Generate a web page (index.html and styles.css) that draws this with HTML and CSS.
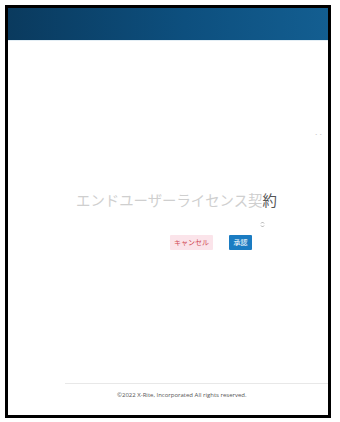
FILE: index.html
```html
<!DOCTYPE html>
<html lang="ja">
<head>
<meta charset="utf-8">
<link rel="stylesheet" href="styles.css">
</head>
<body>
<div class="frame">
  <div class="header"></div>
  <div class="main">
    <div class="dots-row"><span class="dots">··</span></div>
    <h1 class="title">エンドユーザーライセンス契<span class="last">約</span></h1>
    <div class="icon-row">
      <svg class="sort" width="5" height="7" viewBox="0 0 5 7"><path d="M1 2.5 L2.5 1 L4 2.5 M1 4.5 L2.5 6 L4 4.5" fill="none" stroke="#999" stroke-width="0.8"/></svg>
    </div>
    <div class="actions">
      <button class="btn btn-cancel">キャンセル</button>
      <button class="btn btn-ok">承認</button>
    </div>
  </div>
  <div class="footer">©2022 X-Rite, Incorporated All rights reserved.</div>
</div>
</body>
</html>
```
FILE: styles.css
```css
html, body { margin: 0; padding: 0; background: #fff; }
body { font-family: "Noto Sans CJK JP", "Noto Sans", sans-serif; }
.frame {
  margin: 5px 0 0 5px;
  width: 320px;
  height: 407px;
  border: 3px solid #000;
  display: flex;
  flex-direction: column;
  box-sizing: content-box;
  background: #fff;
}
.header {
  height: 32px;
  background: linear-gradient(90deg, #0a3a5e 0%, #0d4f7e 55%, #135e91 100%);
  border-bottom: 1px solid #e3eef5;
}
.main {
  flex: 1;
  display: flex;
  flex-direction: column;
}
.dots-row {
  display: flex;
  justify-content: flex-end;
  margin-top: 89px;
  padding-right: 5px;
  height: 8px;
}
.dots { font-size: 8px; line-height: 8px; color: #c8c8c8; }
.title {
  margin: 52px 0 0 0;
  padding-left: 68px;
  font-size: 14.4px;
  line-height: 20px;
  font-weight: 400;
  color: #cfcfcf;
  white-space: nowrap;
}
.title .last { color: #555; }
.icon-row {
  display: flex;
  padding-left: 252px;
  margin-top: 11px;
  height: 8px;
}
.actions {
  display: flex;
  gap: 16px;
  padding-left: 162px;
  margin-top: 6px;
}
.btn {
  border: none;
  border-radius: 1px;
  font-family: "Noto Sans CJK JP", sans-serif;
  font-size: 7px;
  line-height: 15px;
  height: 15px;
  padding: 0;
  margin: 0;
  white-space: nowrap;
  text-align: center;
}
.btn-cancel { background: #fbe4ea; color: #d04a55; width: 43px; }
.btn-ok { background: #1b7cc2; color: #fff; width: 23px; }
.footer {
  margin-left: 57px;
  height: 31px;
  border-top: 1px solid #e8e8e8;
  font-family: "Open Sans", sans-serif;
  font-size: 6px;
  line-height: 22px;
  padding-left: 52px;
  color: #555;
  white-space: nowrap;
}
```
